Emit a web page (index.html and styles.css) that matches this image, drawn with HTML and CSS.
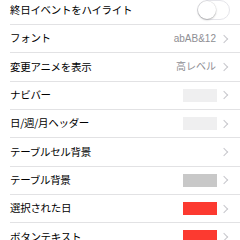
FILE: index.html
```html
<!DOCTYPE html>
<html lang="ja">
<head>
<meta charset="utf-8">
<link rel="stylesheet" href="styles.css">
</head>
<body>
<div class="list">
  <div class="row">
    <span class="label">終日イベントをハイライト</span>
    <span class="switch"><span class="knob"></span></span>
  </div>
  <div class="row">
    <span class="label">フォント</span>
    <span class="right"><span class="value">abAB&amp;12</span><span class="chev"></span></span>
  </div>
  <div class="row">
    <span class="label">変更アニメを表示</span>
    <span class="right"><span class="value">高レベル</span><span class="chev"></span></span>
  </div>
  <div class="row">
    <span class="label">ナビバー</span>
    <span class="right"><span class="swatch light"></span><span class="chev"></span></span>
  </div>
  <div class="row">
    <span class="label">日/週/月ヘッダー</span>
    <span class="right"><span class="swatch light"></span><span class="chev"></span></span>
  </div>
  <div class="row">
    <span class="label">テーブルセル背景</span>
    <span class="right"><span class="chev"></span></span>
  </div>
  <div class="row">
    <span class="label">テーブル背景</span>
    <span class="right"><span class="swatch gray"></span><span class="chev"></span></span>
  </div>
  <div class="row">
    <span class="label">選択された日</span>
    <span class="right"><span class="swatch red"></span><span class="chev"></span></span>
  </div>
  <div class="row">
    <span class="label">ボタンテキスト</span>
    <span class="right"><span class="swatch red"></span><span class="chev"></span></span>
  </div>
</div>
</body>
</html>
```
FILE: styles.css
```css
html, body {
  margin: 0;
  padding: 0;
  background: #ffffff;
  width: 240px;
  height: 240px;
  overflow: hidden;
}
body {
  font-family: "Noto Sans CJK JP", "Noto Sans", sans-serif;
  color: #000;
}
.list {
  margin-top: -3.4px;
}
.row {
  box-sizing: border-box;
  height: 28.33px;
  margin-left: 10px;
  padding-right: 12px;
  border-bottom: 1px solid #e2e2e4;
  display: flex;
  align-items: center;
  justify-content: space-between;
}
.label {
  font-size: 10.5px;
  letter-spacing: -0.3px;
  line-height: 1;
}
.right {
  display: flex;
  align-items: center;
}
.value {
  font-size: 10px;
  color: #8e8e93;
  line-height: 1;
  margin-right: 5px;
  font-family: "Liberation Sans", "Noto Sans CJK JP", sans-serif;
}
.chev {
  width: 5px;
  height: 5px;
  border-right: 1.2px solid #c7c7cc;
  border-top: 1.2px solid #c7c7cc;
  transform: rotate(45deg);
  margin-right: 1px;
}
.swatch {
  width: 34px;
  height: 13px;
  margin-right: 4px;
}
.swatch.light { background: #efeff0; }
.swatch.gray { background: #c8c8c8; }
.swatch.red { background: #fc3a30; }
.switch {
  position: relative;
  box-sizing: border-box;
  width: 33px;
  height: 20px;
  border-radius: 10px;
  border: 1.3px solid #e5e5ea;
  margin-right: -2px;
  background: #fff;
}
.knob {
  position: absolute;
  left: -0.3px;
  top: -0.3px;
  width: 18px;
  height: 18px;
  border-radius: 50%;
  background: #fff;
  box-shadow: 0 1px 2px rgba(0,0,0,0.25), 0 0 0 0.5px rgba(0,0,0,0.08);
}
```
